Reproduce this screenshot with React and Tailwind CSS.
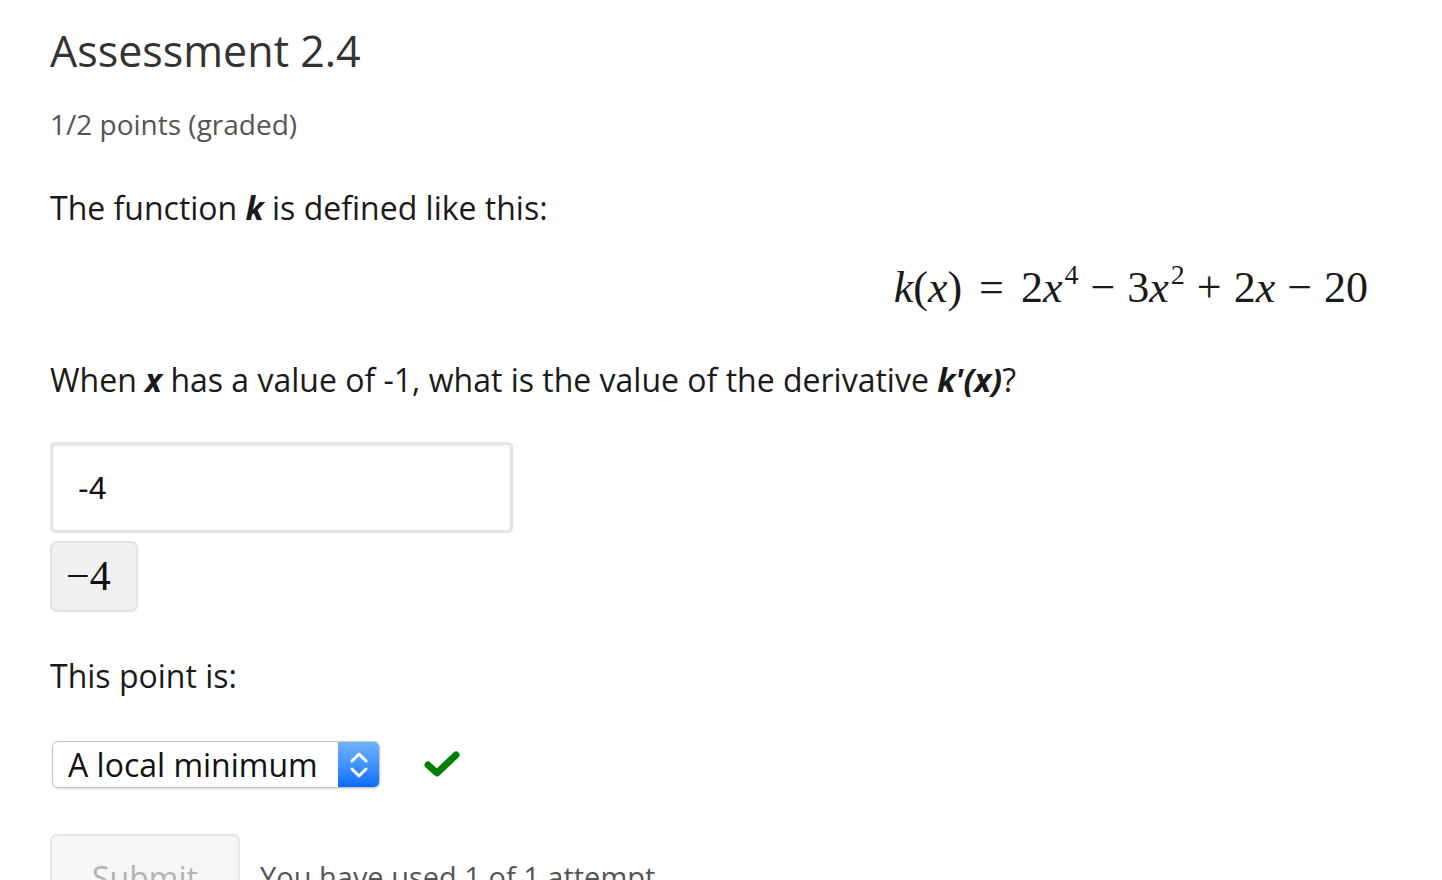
import React from "react"

const sans = { fontFamily: '"Open Sans", "Noto Sans", sans-serif' }

function Math({ children, className = "" }) {
  return (
    <span className={`font-['Liberation_Serif',serif] ${className}`}>{children}</span>
  )
}

function SelectArrows() {
  return (
    <svg width="20" height="32" viewBox="0 0 20 32" fill="none" stroke="white" strokeWidth="3" strokeLinecap="round" strokeLinejoin="round">
      <path d="M3 12 L10 5 L17 12" />
      <path d="M3 20 L10 27 L17 20" />
    </svg>
  )
}

function Check() {
  return (
    <svg width="36" height="30" viewBox="0 0 36 30">
      <path d="M4 16 L13 24 L32 6" fill="none" stroke="#008000" strokeWidth="7" strokeLinecap="round" strokeLinejoin="round" />
    </svg>
  )
}

export default function App() {
  return (
    <div className="min-h-[880px] bg-white overflow-hidden pl-[50px] pr-[74px] text-[#1a1a1a]" style={sans}>
      <h1 className="pt-[23px] text-[43px] leading-[56px] font-normal text-[#333]">Assessment 2.4</h1>
      <p className="mt-[25px] text-[28px] leading-[40px] text-[#555]">1/2 points (graded)</p>

      <p className="mt-[40px] text-[32px] leading-[48px]">
        The function <b className="italic font-bold">k</b> is defined like this:
      </p>

      <div className="mt-[26px] flex justify-end text-[44px] leading-[60px]">
        <Math>
          <i>k</i>(<i>x</i>) <span className="mx-[6px]">=</span> 2<i>x</i>
          <sup className="text-[28px] relative -top-[18px] ml-[2px]">4</sup>
          <span className="mx-[12px]">−</span>3<i>x</i>
          <sup className="text-[28px] relative -top-[18px] ml-[2px]">2</sup>
          <span className="mx-[12px]">+</span>2<i>x</i>
          <span className="mx-[12px]">−</span>20
        </Math>
      </div>

      <p className="mt-[38px] text-[32px] leading-[48px]">
        When <b className="italic font-bold">x</b> has a value of -1, what is the value of the derivative{" "}
        <b className="italic font-bold">k'(x)</b>?
      </p>

      <div className="mt-[38px] w-[463px] h-[91px] border-[3px] border-[#e4e4e4] rounded-[5px] shadow-[inset_0_1px_3px_rgba(0,0,0,0.08)] flex items-center pl-[25px] text-[32px] text-[#111] font-['Liberation_Sans',sans-serif]">
        -4
      </div>
      <div className="mt-[8px] w-[88px] h-[71px] bg-[#f0f0f0] border-2 border-[#e2e2e2] rounded-[7px] flex items-center pl-[14px] text-[42px] text-[#111]">
        <Math>−4</Math>
      </div>

      <p className="mt-[40px] text-[32px] leading-[48px]">This point is:</p>

      <div className="mt-[41px] flex items-center">
        <div className="ml-[2px] w-[328px] h-[47px] flex border border-[#c6c6c6] rounded-[6px] shadow-[0_1px_2px_rgba(0,0,0,0.15)] overflow-hidden">
          <div className="flex-1 flex items-center pl-[15px] text-[32px] leading-none text-[#111]">A local minimum</div>
          <div className="w-[41px] flex items-center justify-center bg-gradient-to-b from-[#6eb4fb] to-[#0a6cff]">
            <SelectArrows />
          </div>
        </div>
        <div className="ml-[44px] mt-[-2px]">
          <Check />
        </div>
      </div>

      <div className="mt-[46px] flex items-start">
        <div className="w-[190px] h-[80px] bg-[#f6f6f6] border-2 border-[#e6e6e6] rounded-[7px] flex justify-center pt-[18px] text-[32px] leading-[48px] text-[#b3b3b3]">
          Submit
        </div>
        <p className="ml-[20px] pt-[19px] text-[29px] leading-[48px] text-[#555]">You have used 1 of 1 attempt</p>
      </div>
    </div>
  )
}
